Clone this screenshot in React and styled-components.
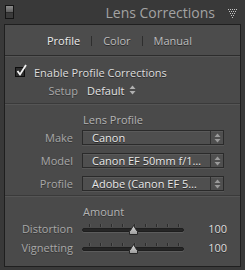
import React from 'react'
import styled, { createGlobalStyle } from 'styled-components'

const GlobalStyle = createGlobalStyle`
  body {
    margin: 0;
    background: #393939;
    font-family: "Open Sans", "DejaVu Sans", sans-serif;
  }
`

const This = styled.div`
  width: 245px;
  height: 270px;
  background: #393939;
  display: flex;
  flex-direction: column;
  overflow: hidden;
`

const Header = styled.div`
  height: 24px;
  display: flex;
  align-items: center;
  padding: 0 8px 0 5px;
`

const Title = styled.div`
  flex-grow: 1;
  text-align: right;
  font-size: 14px;
  color: #a3a3a3;
  margin-right: 13px;
`

const Panel = styled.div`
  margin: 0 4px;
  height: 241px;
  border: 1px solid #1f1f1f;
  background: #4a4a4a;
  display: flex;
  flex-direction: column;
`

const TabRow = styled.div`
  height: 30px;
  flex-shrink: 0;
  display: flex;
  align-items: center;
  justify-content: center;
  border-bottom: 1px solid #2c2c2c;
  background: #4c4c4c;
  font-size: 11px;
  padding-right: 6px;
`

const Tab = styled.span`
  color: ${props => props.active ? '#ececec' : '#bdbdbd'};
  text-shadow: 0 1px 0 #2a2a2a;
`

const TabDivider = styled.span`
  width: 1px;
  height: 10px;
  background: #2e2e2e;
  margin: 2px 11px 0;
`

const Section = styled.div`
  display: flex;
  flex-direction: column;
  flex-shrink: 0;
  border-top: 1px solid #555;
  border-bottom: ${props => props.last ? 'none' : '1px solid #3a3a3a'};
  padding: ${props => props.padding};
`

const CheckRow = styled.label`
  height: 18px;
  display: flex;
  align-items: center;
  gap: 9px;
  padding-left: 10px;
  font-size: 11px;
  color: #dedede;
  text-shadow: 0 1px 0 #2a2a2a;
`

const CheckBox = styled.span`
  position: relative;
  width: 8px;
  height: 8px;
  border: 1px solid #0d0d0d;
  background: #2d2d2d;
`

const CheckMark = styled.svg`
  position: absolute;
  left: 0;
  top: -4px;
`

const Row = styled.div`
  display: grid;
  grid-template-columns: ${props => props.columns};
  column-gap: 9px;
  align-items: center;
  height: ${props => props.height};
`

const Label = styled.span`
  text-align: right;
  font-size: 11px;
  color: #a8a8a8;
  text-shadow: 0 1px 0 #363636;
`

const Heading = styled.div`
  display: flex;
  align-items: center;
  padding-left: 78px;
  font-size: 11px;
  color: #b4b4b4;
  text-shadow: 0 1px 0 #363636;
  height: ${props => props.height};
`

const Inline = styled.span`
  display: flex;
  align-items: center;
  gap: 5px;
  font-size: 11px;
  color: #e2e2e2;
  text-shadow: 0 1px 0 #2a2a2a;
`

const Select = styled.div`
  height: 13px;
  display: flex;
  align-items: stretch;
  border: 1px solid #2a2a2a;
  background: #4f4f4f;
  box-shadow: inset 0 1px 0 #5a5a5a, 0 1px 0 #575757;
`

const SelectText = styled.span`
  flex-grow: 1;
  display: flex;
  align-items: center;
  padding-left: 9px;
  font-size: 11px;
  color: #e8e8e8;
  white-space: nowrap;
  text-shadow: 0 1px 0 #2a2a2a;
`

const ArrowCell = styled.span`
  width: 12px;
  border-left: 1px solid #2f2f2f;
  display: flex;
  align-items: center;
  justify-content: center;
`

const SliderBox = styled.div`
  position: relative;
  height: 14px;
`

const Track = styled.div`
  position: absolute;
  left: 0;
  right: 0;
  top: 6px;
  height: 2px;
  border-radius: 3px;
  background: #262626;
  border: 1px solid #1e1e1e;
  box-shadow: 0 1px 0 #5c5c5c;
`

const Ticks = styled.div`
  position: absolute;
  left: 7px;
  right: 5px;
  top: 2px;
  display: flex;
  justify-content: space-between;
`

const Tick = styled.span`
  width: 1px;
  height: 3px;
  background: #2c2c2c;
  box-shadow: 1px 0 0 #555;
`

const Thumb = styled.svg`
  position: absolute;
  left: 47px;
  top: 3px;
`

const Value = styled.span`
  text-align: right;
  font-size: 11px;
  color: #dedede;
  text-shadow: 0 1px 0 #2a2a2a;
  padding-right: 13px;
`

const UpDown = ({ color = '#9a9a9a' }) => (
  <svg width="7" height="10" viewBox="0 0 7 10">
    <path d="M3.5 0.5 L6.5 4 L0.5 4 Z" fill={color} />
    <path d="M3.5 9.5 L6.5 6 L0.5 6 Z" fill={color} />
  </svg>
)

const PanelIcon = () => (
  <svg width="9" height="14" viewBox="0 0 9 14">
    <defs>
      <linearGradient id="top" x1="0" y1="0" x2="0" y2="1">
        <stop offset="0" stopColor="#8c8c8c" />
        <stop offset="1" stopColor="#5e5e5e" />
      </linearGradient>
    </defs>
    <rect x="0.5" y="0.5" width="8" height="13" fill="#2c2c2c" stroke="#141414" />
    <rect x="1" y="1" width="7" height="6" fill="url(#top)" />
    <rect x="1" y="8" width="7" height="5" fill="#3a3a3a" />
  </svg>
)

const DotTriangle = () => {
  const dots = []
  ;[5, 4, 3, 2, 1].forEach((count, r) => {
    for (let i = 0; i < count; i++) {
      dots.push(<rect key={`${r}-${i}`} x={r + i * 2} y={r * 2} width="1" height="1" fill="#c4c4c4" />)
    }
  })
  return (
    <svg width="9" height="9" viewBox="0 0 9 9" style={{ marginTop: 3 }}>{dots}</svg>
  )
}

const Slider = () => (
  <SliderBox>
    <Ticks>
      {Array(9).fill(null).map((_, i) => <Tick key={i} />)}
    </Ticks>
    <Track />
    <Thumb width="9" height="10" viewBox="0 0 9 10">
      <defs>
        <linearGradient id="thumb" x1="0" y1="0" x2="0" y2="1">
          <stop offset="0" stopColor="#dadada" />
          <stop offset="1" stopColor="#9a9a9a" />
        </linearGradient>
      </defs>
      <path d="M4.5 0.5 L7.3 5 L8.5 6.5 L8.5 9.5 L0.5 9.5 L0.5 6.5 L1.7 5 Z" fill="url(#thumb)" stroke="#262626" strokeWidth="1" strokeLinejoin="round" />
    </Thumb>
  </SliderBox>
)

const selects = [
  { label: 'Make', value: 'Canon' },
  { label: 'Model', value: 'Canon EF 50mm f/1…' },
  { label: 'Profile', value: 'Adobe (Canon EF 5…' },
]

const sliders = [
  { label: 'Distortion', value: 100 },
  { label: 'Vignetting', value: 100 },
]

const App = () => (
  <This>
    <GlobalStyle />
    <Header>
      <PanelIcon />
      <Title>Lens Corrections</Title>
      <DotTriangle />
    </Header>

    <Panel>
      <TabRow>
        <Tab active>Profile</Tab>
        <TabDivider />
        <Tab>Color</Tab>
        <TabDivider />
        <Tab>Manual</Tab>
      </TabRow>

      <Section padding="6px 0 4px">
        <CheckRow>
          <CheckBox>
            <CheckMark width="12" height="13" viewBox="0 0 12 13">
              <path d="M1.5 7 L4 10.5 L10 1" fill="none" stroke="#f2f2f2" strokeWidth="1.8" />
            </CheckMark>
          </CheckBox>
          Enable Profile Corrections
        </CheckRow>
        <Row columns="73px auto" height="18px">
          <Label>Setup</Label>
          <Inline>Default <UpDown color="#b0b0b0" /></Inline>
        </Row>
      </Section>

      <Section padding="7px 0 0">
        <Heading height="14px">Lens Profile</Heading>
        {selects.map(item => (
          <Row key={item.label} columns="68px 142px" height="23px">
            <Label>{item.label}</Label>
            <Select>
              <SelectText>{item.value}</SelectText>
              <ArrowCell><UpDown /></ArrowCell>
            </Select>
          </Row>
        ))}
      </Section>

      <Section padding="6px 0 0" last>
        <Heading height="16px">Amount</Heading>
        {sliders.map(item => (
          <Row key={item.label} columns="68px 102px 1fr" height="19px">
            <Label>{item.label}</Label>
            <Slider />
            <Value>{item.value}</Value>
          </Row>
        ))}
      </Section>
    </Panel>
  </This>
)

export default App
